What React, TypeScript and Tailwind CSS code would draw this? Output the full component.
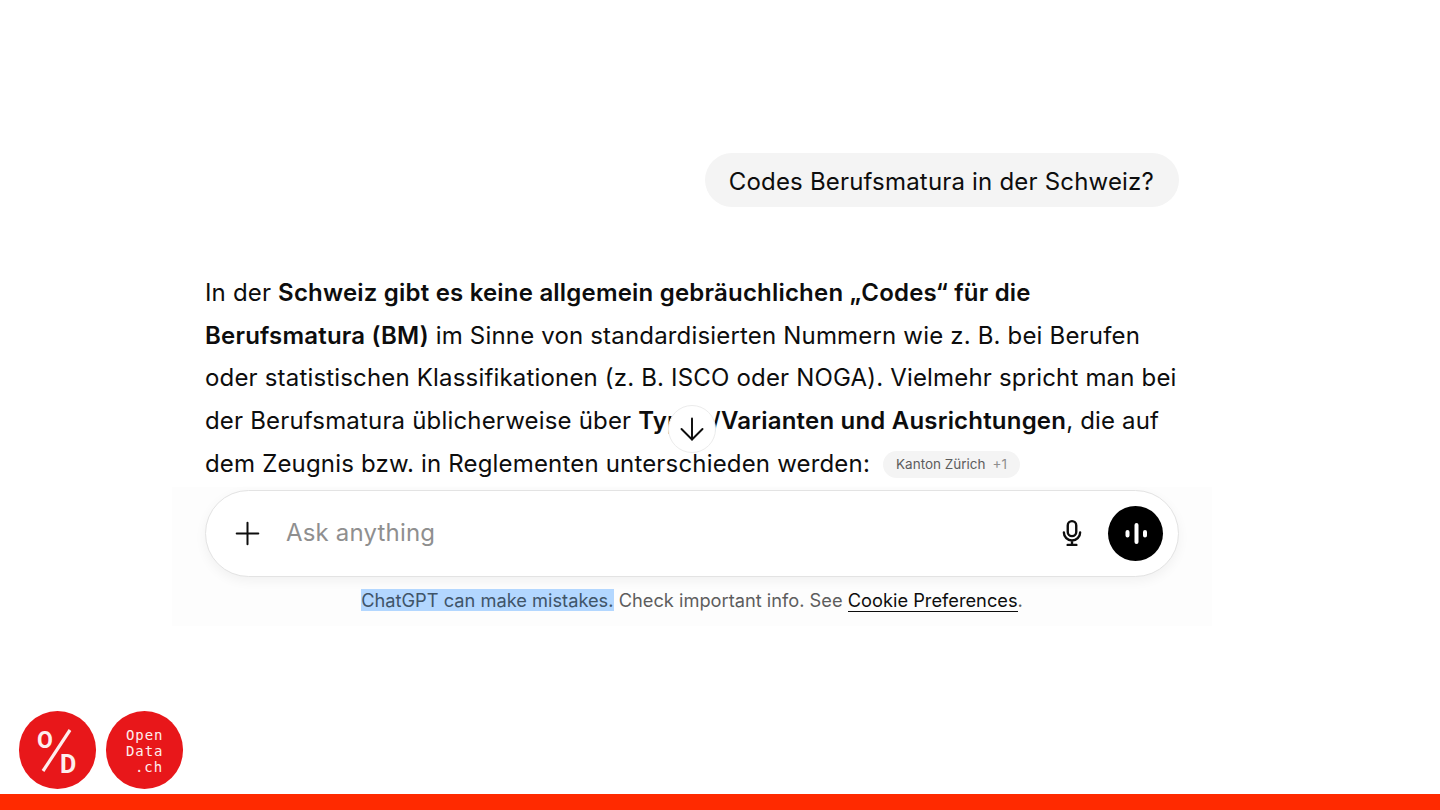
import { Plus, ArrowDown } from "lucide-react";

export default function App() {
  return (
    <div className="relative flex h-[810px] w-[1440px] flex-col overflow-hidden bg-white font-['Inter',sans-serif] text-[#0d0d0d]">
      <main className="ml-[205px] flex w-[974px] flex-col pt-[153px]">
        <div className="flex justify-end">
          <div className="flex h-[54px] items-center rounded-[27px] bg-[#f4f4f4] pl-[24px] pr-[25px] pt-[3px] text-[24px] tracking-[0.19px]">
            Codes Berufsmatura in der Schweiz?
          </div>
        </div>
        <div className="relative mt-[65px] text-[24px] leading-[42.7px] tracking-[0.175px] whitespace-nowrap">
          <p>
            In der <b className="font-semibold tracking-[0.2px]">Schweiz gibt es keine allgemein gebräuchlichen „Codes“ für die</b>
            <br />
            <b className="font-semibold tracking-[0.2px]">Berufsmatura (BM)</b> im Sinne von standardisierten Nummern wie z. B. bei Berufen
            <br />
            oder statistischen Klassifikationen (z. B. ISCO oder NOGA). Vielmehr spricht man bei
            <br />
            der Berufsmatura üblicherweise über <b className="font-semibold tracking-[0.2px]">Typen/Varianten und Ausrichtungen</b>, die auf
            <br />
            dem Zeugnis bzw. in Reglementen unterschieden werden:
            <span className="ml-[13px] inline-flex h-[27px] items-center gap-[7px] rounded-full bg-[#f4f4f4] px-[13px] align-[3px] text-[13.5px] leading-none tracking-normal text-[#5d5d5d]">
              Kanton Zürich <span className="text-[#8f8f8f]">+1</span>
            </span>
          </p>
          <button className="absolute left-[463px] top-[133px] flex h-[48px] w-[48px] items-center justify-center rounded-full border border-[#ececec] bg-white">
            <ArrowDown size={36} strokeWidth={1.3} color="#0d0d0d" />
          </button>
        </div>
        <div className="-mx-[33px] mt-[1px] flex flex-col items-center bg-[#fdfdfd] px-[33px] pb-[14px] pt-[3px]">
          <div className="flex h-[87px] w-full items-center rounded-[44px] border border-[#e3e3e3] bg-white pl-[23px] pr-[15px] shadow-[0_4px_12px_rgba(0,0,0,0.05)]">
            <Plus size={37} strokeWidth={1.3} color="#0d0d0d" />
            <span className="ml-[20px] text-[24px] tracking-[0.18px] text-[#8f8f8f]">Ask anything</span>
            <svg className="ml-auto" width="30" height="30" viewBox="0 0 24 24" fill="none" stroke="#0d0d0d" strokeWidth="1.9" strokeLinecap="round">
              <rect x="8.6" y="2.5" width="6.8" height="12" rx="3.4" />
              <path d="M5.5 11.5a6.5 6.5 0 0 0 13 0M12 18v3.2M8.5 21.5h7" />
            </svg>
            <div className="ml-[21px] flex h-[55px] w-[55px] items-center justify-center rounded-full bg-black">
              <svg width="26" height="26" viewBox="0 0 26 26" fill="none" stroke="#fff" strokeWidth="4" strokeLinecap="round">
                <path d="M4.5 12v3.5M13.5 5v17M22 12v3.5" />
              </svg>
            </div>
          </div>
          <p className="mt-[11px] text-[18.25px] leading-[24px] text-[#5d5d5d]">
            <span className="bg-[#b3d7ff] text-[#3f5468]">ChatGPT can make mistakes.</span> Check important info. See{" "}
            <span className="border-b border-[#0d0d0d] leading-[20px] text-[#0d0d0d]">Cookie Preferences</span>.
          </p>
        </div>
      </main>
      <div className="mt-auto flex gap-[10px] pb-[5px] pl-[19px]">
        <div className="relative h-[78px] w-[77px] rounded-full bg-[#e8171a] font-['Roboto',sans-serif] font-bold text-[#fdeeee]">
          <span className="absolute left-[18px] top-[18px] text-[23px] leading-[23px]">O</span>
          <span className="absolute left-[41px] top-[41px] text-[25px] leading-[25px]">D</span>
          <svg className="absolute inset-0" width="77" height="78" viewBox="0 0 77 78">
            <path d="M51 19 24 60" stroke="#fdeeee" strokeWidth="3.2" fill="none" />
          </svg>
        </div>
        <div className="flex h-[78px] w-[77px] flex-col justify-center rounded-full bg-[#e8171a] pl-[20px] pt-[1px] font-['DejaVu_Sans_Mono',monospace] text-[14px] leading-[16px] tracking-[0.9px] text-[#fdeeee]">
          <span>Open</span>
          <span>Data</span>
          <span className="pl-[9px]">.ch</span>
        </div>
      </div>
      <div className="h-[16px] w-full bg-[#ff2a00]" />
    </div>
  );
}
